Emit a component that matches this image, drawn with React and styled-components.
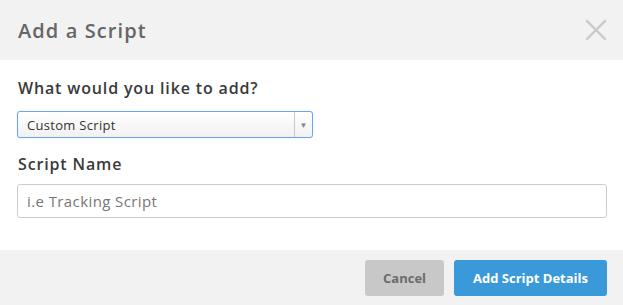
import React from 'react'
import styled, { createGlobalStyle } from 'styled-components'

const GlobalStyle = createGlobalStyle`
  * { box-sizing: border-box; }
  body {
    margin: 0;
    font-family: "Open Sans", "Liberation Sans", sans-serif;
    background: #ffffff;
  }
`

const Modal = styled.div`
  width: 623px;
  height: 305px;
  display: flex;
  flex-direction: column;
  background: #fff;
`

const Header = styled.header`
  height: 60px;
  background: #f2f2f2;
  display: flex;
  align-items: center;
  justify-content: space-between;
  padding: 0 16px 0 18px;
`

const Title = styled.h1`
  margin: 0;
  font-size: 20px;
  font-weight: 600;
  color: #666;
  letter-spacing: 1.1px;
`

const CloseButton = styled.button`
  border: none;
  background: none;
  padding: 0;
  width: 22px;
  height: 22px;
  cursor: pointer;
  display: flex;
`

const Body = styled.div`
  flex: 1;
  padding: 17px 16px 0 17px;
  display: flex;
  flex-direction: column;
`

const Label = styled.label`
  font-size: 16px;
  font-weight: 600;
  color: #3a3a3a;
  letter-spacing: 0.85px;
  margin-bottom: ${p => p.$gap}px;
  padding-left: 1px;
`

const SelectBox = styled.div`
  width: 296px;
  height: 27px;
  border: 1px solid #6ea4ec;
  border-radius: 3px;
  display: flex;
  background: linear-gradient(#ffffff, #f1f1f1);
  box-shadow: 0 0 1px #8ab6f0;
  margin-bottom: 15px;
`

const SelectValue = styled.div`
  flex: 1;
  font-size: 13px;
  letter-spacing: 0.3px;
  color: #333;
  padding-left: 9px;
  display: flex;
  align-items: center;
`

const SelectArrow = styled.div`
  width: 18px;
  border-left: 1px solid #c8c8c8;
  display: flex;
  align-items: center;
  justify-content: center;
  font-size: 8px;
  color: #888;
`

const TextInput = styled.input`
  width: 590px;
  height: 34px;
  border: 1px solid #ccc;
  border-radius: 3px;
  padding: 0 9px;
  font-family: inherit;
  font-size: 15px;
  letter-spacing: 0.4px;
  color: #555;
  &::placeholder { color: #777; }
`

const Footer = styled.footer`
  height: 55px;
  background: #f2f2f2;
  display: flex;
  align-items: center;
  justify-content: flex-end;
  gap: 10px;
  padding: 0 16px 0 0;
`

const Button = styled.button`
  height: 36px;
  border: none;
  border-radius: 3px;
  padding: 0 ${p => p.$pad}px;
  font-family: inherit;
  font-size: 13px;
  font-weight: 700;
  color: ${p => p.$primary ? '#fff' : '#6b6b6b'};
  background: ${p => p.$primary ? '#3a9ad9' : '#c8c8c8'};
  cursor: pointer;
`

export default function App() {
  return (
    <Modal>
      <GlobalStyle />
      <Header>
        <Title>Add a Script</Title>
        <CloseButton aria-label="close">
          <svg width="22" height="22" viewBox="0 0 22 22">
            <path d="M2 2 L20 20 M20 2 L2 20" stroke="#c9c9c9" strokeWidth="2.4" strokeLinecap="round" />
          </svg>
        </CloseButton>
      </Header>
      <Body>
        <Label $gap={12}>What would you like to add?</Label>
        <SelectBox>
          <SelectValue>Custom Script</SelectValue>
          <SelectArrow>▼</SelectArrow>
        </SelectBox>
        <Label $gap={9}>Script Name</Label>
        <TextInput placeholder="i.e Tracking Script" />
      </Body>
      <Footer>
        <Button $pad={18}>Cancel</Button>
        <Button $primary $pad={19}>Add Script Details</Button>
      </Footer>
    </Modal>
  )
}
